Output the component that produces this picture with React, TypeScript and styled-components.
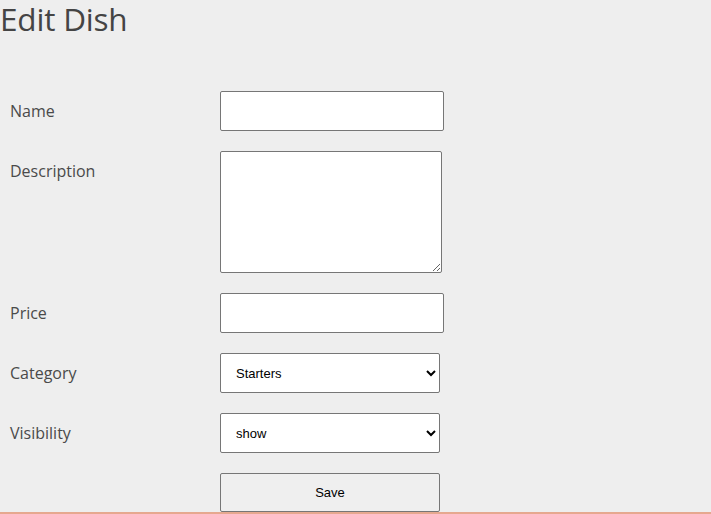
import React from "react";
import styled, { createGlobalStyle } from "styled-components";

const Global = createGlobalStyle`
  html, body { margin: 0; padding: 0; background: #eeeeee; }
  body { font-family: "Open Sans", "DejaVu Sans", sans-serif; color: #444; }
  * { box-sizing: border-box; }
`;

const Page = styled.div`
  display: flex;
  flex-direction: column;
`;

const Title = styled.h1`
  margin: 0 0 53px 0;
  font-size: 31.5px;
  line-height: 38px;
  font-weight: 400;
  color: #444;
  letter-spacing: -0.2px;
`;

const Form = styled.form`
  display: flex;
  flex-direction: column;
  gap: 20px;
`;

const Row = styled.div`
  display: grid;
  grid-template-columns: 220px auto;
  align-items: start;
`;

const Label = styled.label`
  padding: 9px 0 0 10px;
  font-size: 16px;
  line-height: 22px;
  color: #4a4a4a;
`;

const Field = styled.div`
  display: flex;
`;

const TextInput = styled.input`
  width: 224px;
  height: 40px;
  border: 1px solid #767676;
  border-radius: 2px;
  background: #fff;
  padding: 0 8px;
  font-family: "Liberation Sans", Arial, sans-serif;
  font-size: 13px;
  margin: 0;
`;

const TextArea = styled.textarea`
  width: 222px;
  height: 122px;
  border: 1px solid #767676;
  border-radius: 2px;
  background: #fff;
  padding: 4px;
  font-family: "Liberation Sans", Arial, sans-serif;
  font-size: 13px;
  margin: 0;
  display: block;
`;

const Select = styled.select`
  width: 220px;
  height: 40px;
  border: 1px solid #767676;
  border-radius: 2px;
  background: #fff;
  padding: 0 0 0 11px;
  font-family: "Liberation Sans", Arial, sans-serif;
  font-size: 13px;
  color: #000;
  margin: 0;
`;

const Button = styled.button`
  width: 220px;
  height: 39px;
  border: 1px solid #767676;
  border-radius: 2px;
  background: #efefef;
  font-family: "Liberation Sans", Arial, sans-serif;
  font-size: 13px;
  color: #000;
  margin: 0;
  padding: 0;
`;

const Footer = styled.div`
  border-top: 2px solid #e6a88f;
  height: 80px;
`;

export default function App() {
  return (
    <Page>
      <Global />
      <Title>Edit Dish</Title>
      <Form onSubmit={(e) => e.preventDefault()}>
        <Row>
          <Label htmlFor="name">Name</Label>
          <Field>
            <TextInput id="name" type="text" />
          </Field>
        </Row>
        <Row>
          <Label htmlFor="desc">Description</Label>
          <Field>
            <TextArea id="desc" />
          </Field>
        </Row>
        <Row>
          <Label htmlFor="price">Price</Label>
          <Field>
            <TextInput id="price" type="text" />
          </Field>
        </Row>
        <Row>
          <Label htmlFor="cat">Category</Label>
          <Field>
            <Select id="cat" defaultValue="Starters">
              <option>Starters</option>
              <option>Mains</option>
              <option>Desserts</option>
            </Select>
          </Field>
        </Row>
        <Row>
          <Label htmlFor="vis">Visibility</Label>
          <Field>
            <Select id="vis" defaultValue="show">
              <option>show</option>
              <option>hide</option>
            </Select>
          </Field>
        </Row>
        <Row>
          <span />
          <Field>
            <Button type="submit">Save</Button>
          </Field>
        </Row>
      </Form>
      <Footer />
    </Page>
  );
}
